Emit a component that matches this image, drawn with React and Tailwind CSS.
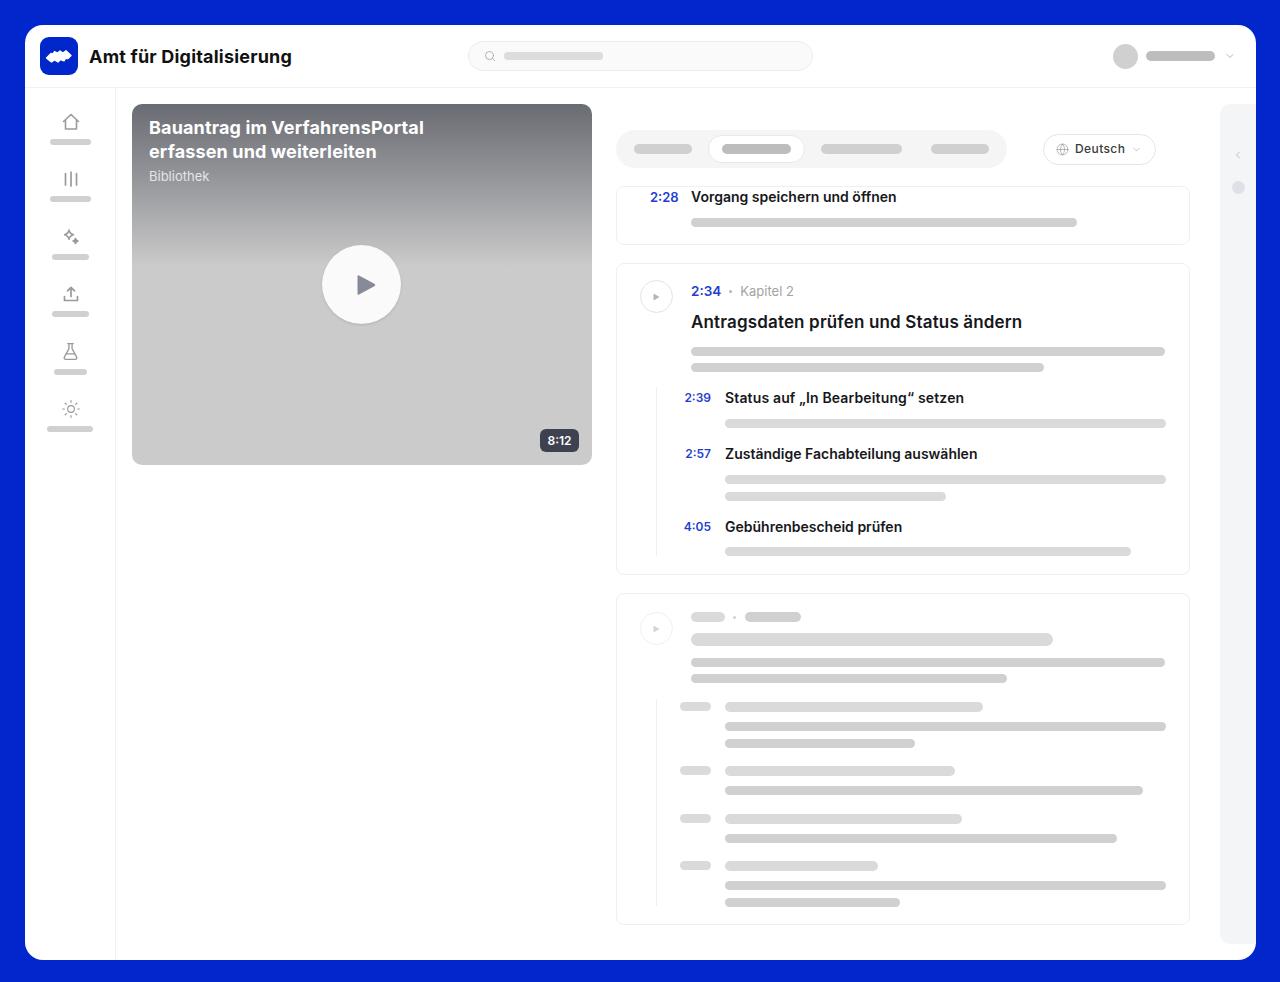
import React from 'react';
import { ChevronDown, ChevronLeft, FlaskConical, Globe, Search, Sun } from 'lucide-react';

function Bar({ className = '' }) {
  return <div className={`rounded-full ${className}`} />;
}

function Logo() {
  return (
    <div className="flex h-[38px] w-[38px] items-center justify-center rounded-[9px] bg-[#0026cc]">
      <svg width="28" height="15" viewBox="0 0 28 15" fill="#ffffff" stroke="#ffffff" strokeWidth="1.4" strokeLinejoin="round">
        <path d="M1.5 9 L6 4.5 L8 5 L9.5 2.5 L12.5 4.2 L15 2 L18 4 L21 1.8 L26 6.5 L23 9.5 L20.5 9.2 L19 11.8 L15.5 10.6 L13 13 L9.5 11 L6.5 13 L3.5 10.8 Z" />
      </svg>
    </div>
  );
}

function HomeIcon() {
  return (
    <svg width="18" height="18" viewBox="0 0 18 18" fill="none" stroke="#9a9a9a" strokeWidth="1.6" strokeLinejoin="round" strokeLinecap="round">
      <path d="M1.5 8.5 L9 1.5 L16.5 8.5 M3.5 7 V16 H14.5 V7" />
    </svg>
  );
}

function ColumnsIcon() {
  return (
    <svg width="18" height="18" viewBox="0 0 18 18" fill="none" stroke="#9a9a9a" strokeWidth="1.7" strokeLinecap="round">
      <path d="M3.5 3.5 V15 M9 2 V16 M14.5 3.5 V15" />
    </svg>
  );
}

function SparkIcon() {
  return (
    <svg width="18" height="18" viewBox="0 0 18 18" fill="none" stroke="#9a9a9a" strokeWidth="1.5" strokeLinejoin="round">
      <path d="M7 2 C7.6 5 8.6 6 11.5 6.7 C8.6 7.4 7.6 8.4 7 11.4 C6.4 8.4 5.4 7.4 2.5 6.7 C5.4 6 6.4 5 7 2 Z" />
      <path d="M13.5 10.5 C13.8 12 14.3 12.5 16 13 C14.3 13.5 13.8 14 13.5 15.5 C13.2 14 12.7 13.5 11 13 C12.7 12.5 13.2 12 13.5 10.5 Z" fill="#9a9a9a" />
    </svg>
  );
}

function UploadIcon() {
  return (
    <svg width="18" height="18" viewBox="0 0 18 18" fill="none" stroke="#9a9a9a" strokeWidth="1.7" strokeLinecap="round" strokeLinejoin="round">
      <path d="M9 11.5 V2.5 M5.5 5.8 L9 2.3 L12.5 5.8 M2.5 11.5 V15.5 H15.5 V11.5" />
    </svg>
  );
}

function NavItem({ icon, barClass }) {
  return (
    <div className="flex h-[57.4px] flex-col items-center">
      <div className="ml-[1px] flex h-[18px] items-center justify-center">{icon}</div>
      <Bar className={`mt-[8px] h-[6px] bg-[#d0d0d0] ${barClass}`} />
    </div>
  );
}

function Sidebar() {
  return (
    <aside className="w-[91px] shrink-0 border-r border-[#f1f1f3] pt-[25px]">
      <NavItem icon={<HomeIcon />} barClass="w-[41px]" />
      <NavItem icon={<ColumnsIcon />} barClass="w-[41px]" />
      <NavItem icon={<SparkIcon />} barClass="w-[37px]" />
      <NavItem icon={<UploadIcon />} barClass="w-[37px]" />
      <NavItem icon={<FlaskConical size={19} strokeWidth={1.7} color="#9a9a9a" />} barClass="w-[33px]" />
      <NavItem icon={<Sun size={20} strokeWidth={1.4} color="#9a9a9a" />} barClass="w-[46px]" />
    </aside>
  );
}

function PlayCircle({ faded }) {
  return (
    <div className={`flex h-[33px] w-[33px] shrink-0 items-center justify-center rounded-full border ${faded ? 'border-[#f0f0f0]' : 'border-[#e3e3e3]'}`}>
      <svg width="7" height="8" viewBox="0 0 7 8" fill={faded ? '#d4d4d4' : '#b5b5b5'}>
        <path d="M0.5 0.5 L6.5 4 L0.5 7.5 Z" />
      </svg>
    </div>
  );
}

function SubRow({ time, title, bars, className = '', titleClass = '' }) {
  return (
    <div className={`flex ${className}`}>
      <div className="w-[53px] shrink-0 text-right text-[12px] leading-[20px] font-semibold text-[#1f3fcf]">{time}</div>
      <div className="ml-[14px] flex-1">
        <div className={`text-[14px] leading-[20px] font-semibold text-[#17181c] ${titleClass}`}>{title}</div>
        {bars}
      </div>
    </div>
  );
}

function VideoCard() {
  return (
    <div className="relative h-[361px] w-[460px] shrink-0 overflow-hidden rounded-[10px] bg-gradient-to-b from-[#6a6c73] from-0% to-[#cbcbcb] to-45% px-[17px] pt-[12px]">
      <h2 className="text-[18px] leading-[24px] font-bold tracking-[0.14px] text-white">
        Bauantrag im VerfahrensPortal<br />erfassen und weiterleiten
      </h2>
      <div className="mt-[3px] text-[13px] leading-[18px] text-[#e4e4e6]">Bibliothek</div>
      <div className="absolute top-[141px] left-[190px] flex h-[79px] w-[79px] items-center justify-center rounded-full bg-[#fafafa] shadow-sm">
        <svg width="19" height="22" viewBox="0 0 19 22" fill="#878b98" className="ml-[9px]">
          <path d="M1.5 1.2 L17.8 10 Q18.6 11 17.8 12 L1.5 20.8 Q0.5 21 0.5 20 V2 Q0.5 1 1.5 1.2 Z" />
        </svg>
      </div>
      <div className="absolute right-[13px] bottom-[13px] w-[39px] rounded-[6px] bg-[#3d4150] py-[3px] text-center text-[12px] leading-[17px] font-semibold text-white">8:12</div>
    </div>
  );
}

function TabsRow() {
  return (
    <div className="flex items-center">
      <div className="flex h-[38px] w-[391px] items-center rounded-full bg-[#f5f5f5] pl-[18px]">
        <Bar className="h-[10px] w-[58px] bg-[#d0d0d0]" />
        <div className="ml-[16px] flex h-[28px] w-[97px] items-center justify-center rounded-full border border-[#e8e8e8] bg-white">
          <Bar className="h-[10px] w-[69px] bg-[#bdbdbd]" />
        </div>
        <Bar className="ml-[16px] h-[10px] w-[81px] bg-[#d0d0d0]" />
        <Bar className="ml-[29px] h-[10px] w-[58px] bg-[#d0d0d0]" />
      </div>
      <div className="ml-[36px] flex h-[31px] w-[113px] items-center rounded-full border border-[#e6e6e6] bg-white pl-[12px]">
        <Globe size={13} strokeWidth={1.3} color="#9a9a9a" />
        <span className="ml-[6px] text-[12px] font-medium tracking-[0.4px] text-[#3a3a3a]">Deutsch</span>
        <ChevronDown size={11} strokeWidth={1.4} color="#a5a5a5" className="ml-[6px]" />
      </div>
    </div>
  );
}

function GhostRow({ titleClass, bars, className = '' }) {
  return (
    <div className={`flex ${className}`}>
      <div className="ml-[23px] w-[31px] shrink-0">
        <Bar className="h-[9px] w-[31px] bg-[#dadada]" />
      </div>
      <div className="ml-[14px] flex-1">
        <Bar className={`h-[10px] bg-[#dadada] ${titleClass}`} />
        {bars.map((w, i) => (
          <Bar key={i} className={`h-[9px] bg-[#d0d0d0] ${i === 0 ? 'mt-[10px]' : 'mt-[8px]'} ${w}`} />
        ))}
      </div>
    </div>
  );
}

function ChapterList() {
  return (
    <div className="w-[574px] shrink-0">
      <div className="pt-[26px]">
        <TabsRow />
      </div>
      <div className="mt-[18px] h-[59px] rounded-[8px] border border-[#efefef] pl-[33px]">
        <div className="flex">
          <div className="w-[28px] text-[13px] leading-[20px] font-semibold text-[#1f3fcf]">2:28</div>
          <div className="ml-[13px] flex-1">
            <div className="text-[14px] leading-[20px] font-semibold text-[#17181c]">Vorgang speichern und öffnen</div>
            <Bar className="mt-[11px] h-[9px] w-[386px] bg-[#d0d0d0]" />
          </div>
        </div>
      </div>

      <div className="mt-[18px] h-[312px] rounded-[8px] border border-[#efefef] px-[23px] pt-[16px]">
        <div className="flex">
          <PlayCircle />
          <div className="ml-[18px] flex-1">
            <div className="flex items-center text-[13px] leading-[22px]">
              <span className="text-[13.5px] font-semibold text-[#1f3fcf]">2:34</span>
              <span className="ml-[8px] h-[3px] w-[3px] rounded-full bg-[#b5b5b5]" />
              <span className="ml-[8px] text-[#a3a3a3]">Kapitel 2</span>
            </div>
            <div className="mt-[8px] text-[17px] leading-[24px] font-semibold tracking-[0.16px] text-[#17181c]">Antragsdaten prüfen und Status ändern</div>
            <Bar className="mt-[13px] h-[9px] w-[474px] bg-[#d0d0d0]" />
            <Bar className="mt-[7px] h-[9px] w-[353px] bg-[#d0d0d0]" />
          </div>
        </div>
        <div className="mt-[15px] ml-[16px] h-[169px] border-l border-[#efefef] pl-[1px]">
          <SubRow
            className="pt-[1px]"
            titleClass="tracking-[0.15px]"
            time="2:39"
            title="Status auf „In Bearbeitung“ setzen"
            bars={<Bar className="mt-[11px] h-[9px] w-[441px] bg-[#dadada]" />}
          />
          <SubRow
            className="mt-[16px]"
            time="2:57"
            title="Zuständige Fachabteilung auswählen"
            bars={
              <>
                <Bar className="mt-[11px] h-[9px] w-[441px] bg-[#dadada]" />
                <Bar className="mt-[8px] h-[9px] w-[221px] bg-[#dadada]" />
              </>
            }
          />
          <SubRow
            className="mt-[16px]"
            time="4:05"
            title="Gebührenbescheid prüfen"
            bars={<Bar className="mt-[10px] h-[9px] w-[406px] bg-[#dadada]" />}
          />
        </div>
      </div>

      <div className="mt-[18px] h-[332px] rounded-[8px] border border-[#efefef] px-[23px] pt-[18px]">
        <div className="flex">
          <PlayCircle faded />
          <div className="ml-[18px] flex-1">
            <div className="flex items-center">
              <Bar className="h-[10px] w-[34px] bg-[#dadada]" />
              <span className="ml-[8px] h-[3px] w-[3px] rounded-full bg-[#d0d0d0]" />
              <Bar className="ml-[9px] h-[10px] w-[56px] bg-[#d0d0d0]" />
            </div>
            <Bar className="mt-[11px] h-[13px] w-[362px] bg-[#dadada]" />
            <Bar className="mt-[12px] h-[9px] w-[474px] bg-[#d0d0d0]" />
            <Bar className="mt-[7px] h-[9px] w-[316px] bg-[#d0d0d0]" />
          </div>
        </div>
        <div className="mt-[16px] ml-[16px] h-[207px] border-l border-[#efefef] pt-[3px]">
          <GhostRow titleClass="w-[258px]" bars={['w-[441px]', 'w-[190px]']} />
          <GhostRow className="mt-[18px]" titleClass="w-[230px]" bars={['w-[418px]']} />
          <GhostRow className="mt-[19px]" titleClass="w-[237px]" bars={['w-[392px]']} />
          <GhostRow className="mt-[18px]" titleClass="w-[153px]" bars={['w-[441px]', 'w-[175px]']} />
        </div>
      </div>
    </div>
  );
}

export default function App() {
  return (
    <div className="h-[982px] w-[1280px] bg-[#0026cc] p-[25px] font-['Inter',sans-serif]">
      <div className="flex h-[935px] w-[1231px] flex-col overflow-hidden rounded-[18px] bg-white">
        <header className="flex h-[63px] shrink-0 items-center border-b border-[#f1f1f3] pl-[15px]">
          <Logo />
          <h1 className="ml-[11px] w-[200px] text-[18px] font-bold tracking-[0.2px] whitespace-nowrap text-[#111111]">Amt für Digitalisierung</h1>
          <div className="ml-[179px] flex h-[30px] w-[345px] items-center rounded-full border border-[#ececec] bg-[#fafafa] pl-[15px]">
            <Search size={12} strokeWidth={1.6} color="#9f9f9f" />
            <Bar className="ml-[8px] h-[8px] w-[99px] bg-[#dcdcdc]" />
          </div>
          <div className="ml-auto flex items-center pr-[20px]">
            <div className="h-[25px] w-[25px] rounded-full bg-[#d0d0d0]" />
            <Bar className="ml-[8px] h-[10px] w-[69px] bg-[#bdbdbd]" />
            <ChevronDown size={12} strokeWidth={1.5} color="#9f9f9f" className="ml-[9px]" />
          </div>
        </header>
        <div className="flex flex-1">
          <Sidebar />
          <main className="flex flex-1 pt-[16px] pl-[16px]">
            <VideoCard />
            <div className="ml-[24px]">
              <ChapterList />
            </div>
            <div className="ml-[30px] flex h-[840px] w-[36px] flex-col items-center rounded-l-[10px] bg-[#f4f5f7] pt-[45px]">
              <ChevronLeft size={12} strokeWidth={1.4} color="#a8a8a8" />
              <div className="mt-[20px] h-[13px] w-[13px] rounded-full bg-[#dfe1e6]" />
            </div>
          </main>
        </div>
      </div>
    </div>
  );
}
